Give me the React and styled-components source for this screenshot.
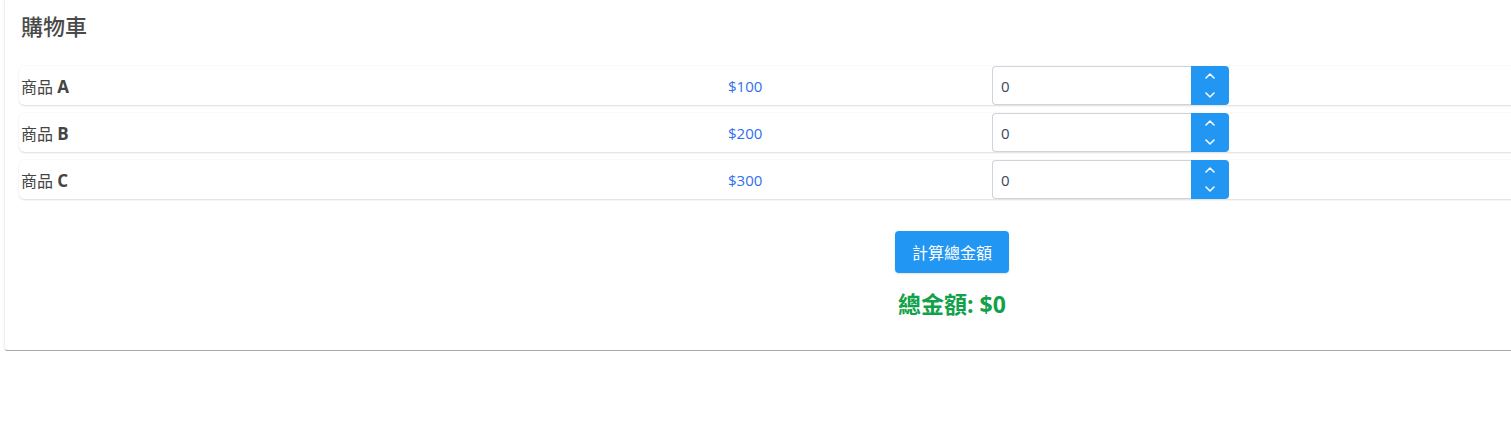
import React, { useState } from 'react';
import styled, { createGlobalStyle } from 'styled-components';

const GlobalStyle = createGlobalStyle`
  html, body {
    margin: 0;
    padding: 0;
    background: #fff;
  }
  body {
    overflow-x: hidden;
    font-family: "Open Sans", "Noto Sans CJK TC", sans-serif;
    color: #444;
  }
`;

const Card = styled.div`
  width: 1896px;
  margin-left: 4px;
  box-sizing: border-box;
  padding: 10px 14px 29px;
  background: #fff;
  border: 1px solid #efefef;
  border-top: none;
  border-bottom: 1px solid #a9a9a9;
  border-radius: 0 0 4px 4px;
  box-shadow: 0 1px 2px rgba(0, 0, 0, 0.08);
`;

const Title = styled.h2`
  margin: 0 0 24px 2px;
  font-size: 22px;
  line-height: 32px;
  font-weight: 500;
  color: #4a4a4a;
`;

const List = styled.div`
  display: flex;
  flex-direction: column;
  gap: 8px;
`;

const Row = styled.div`
  display: grid;
  grid-template-columns: 707px 264px 1fr;
  align-items: center;
  height: 39px;
  padding-left: 2px;
  background: #fff;
  border-radius: 6px;
  box-shadow: 0 1px 2px rgba(0, 0, 0, 0.14), 0 -1px 1px rgba(0, 0, 0, 0.02);
`;

const Name = styled.div`
  font-size: 16px;
  color: #444;

  b {
    font-size: 17px;
    font-weight: 700;
  }
`;

const Price = styled.div`
  font-size: 15px;
  color: #2f6ff0;
`;

const Stepper = styled.div`
  display: flex;
  height: 39px;
`;

const Input = styled.input`
  width: 199px;
  height: 39px;
  box-sizing: border-box;
  border: 1px solid #cfd3dc;
  border-right: none;
  border-radius: 4px 0 0 4px;
  padding: 0 8px;
  font-family: "Open Sans", sans-serif;
  font-size: 15px;
  color: #3b4660;
  outline: none;
`;

const Spin = styled.div`
  width: 38px;
  display: flex;
  flex-direction: column;
  background: #2196f3;
  border-radius: 0 4px 4px 0;
`;

const SpinBtn = styled.button`
  flex: 1;
  border: none;
  background: transparent;
  padding: 0;
  display: flex;
  align-items: center;
  justify-content: center;
  cursor: pointer;
`;

const Footer = styled.div`
  display: flex;
  flex-direction: column;
  align-items: center;
  margin-top: 32px;
`;

const CalcButton = styled.button`
  height: 42px;
  padding: 0 17px;
  border: none;
  border-radius: 4px;
  background: #2196f3;
  color: #fff;
  font-family: "Noto Sans CJK TC", sans-serif;
  font-size: 16px;
  box-shadow: 0 1px 2px rgba(0, 0, 0, 0.12);
  cursor: pointer;
`;

const Total = styled.div`
  margin-top: 14px;
  font-size: 23px;
  font-weight: 700;
  color: #12a14a;
  line-height: 34px;
`;

const Chevron = ({ up }) => (
  <svg width="10" height="6" viewBox="0 0 10 6" fill="none">
    <path
      d={up ? 'M1 5L5 1L9 5' : 'M1 1L5 5L9 1'}
      stroke="#fff"
      strokeWidth="1.5"
      strokeLinecap="round"
      strokeLinejoin="round"
    />
  </svg>
);

const products = [
  { id: 'A', price: 100 },
  { id: 'B', price: 200 },
  { id: 'C', price: 300 },
];

export default function App() {
  const [qty, setQty] = useState({ A: 0, B: 0, C: 0 });
  const [total, setTotal] = useState(0);

  const change = (id, v) => setQty(q => ({ ...q, [id]: Math.max(0, v) }));

  const calc = () =>
    setTotal(products.reduce((s, p) => s + p.price * (qty[p.id] || 0), 0));

  return (
    <>
      <GlobalStyle />
      <Card>
        <Title>購物車</Title>
        <List>
          {products.map(p => (
            <Row key={p.id}>
              <Name>
                商品 <b>{p.id}</b>
              </Name>
              <Price>${p.price}</Price>
              <Stepper>
                <Input
                  value={qty[p.id]}
                  onChange={e => change(p.id, Number(e.target.value) || 0)}
                />
                <Spin>
                  <SpinBtn onClick={() => change(p.id, qty[p.id] + 1)}>
                    <Chevron up />
                  </SpinBtn>
                  <SpinBtn onClick={() => change(p.id, qty[p.id] - 1)}>
                    <Chevron />
                  </SpinBtn>
                </Spin>
              </Stepper>
            </Row>
          ))}
        </List>
        <Footer>
          <CalcButton onClick={calc}>計算總金額</CalcButton>
          <Total>總金額: ${total}</Total>
        </Footer>
      </Card>
    </>
  );
}
